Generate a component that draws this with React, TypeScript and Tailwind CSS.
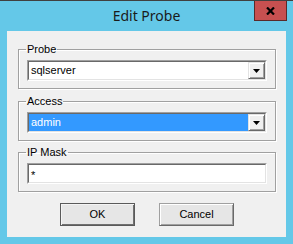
import React from "react";

function Sunken({ children, className = "" }: { children: React.ReactNode; className?: string }) {
  return (
    <div className={"h-[21px] border border-t-[#a0a0a0] border-l-[#a0a0a0] border-b-white border-r-white " + className}>
      <div className="h-full border border-t-[#696969] border-l-[#696969] border-b-[#e3e3e3] border-r-[#e3e3e3] bg-white flex">
        {children}
      </div>
    </div>
  );
}

function DropBtn() {
  return (
    <div className="w-[17px] h-full bg-[#f0f0f0] border border-t-[#e3e3e3] border-l-[#e3e3e3] border-b-[#696969] border-r-[#696969] shadow-[inset_1px_1px_0_#fff,inset_-1px_-1px_0_#a0a0a0] flex items-center justify-center">
      <svg width="7" height="4" viewBox="0 0 7 4">
        <polygon points="0,0 7,0 3.5,4" fill="#000" />
      </svg>
    </div>
  );
}

function Group({ label, children, className = "" }: { label: string; children: React.ReactNode; className?: string }) {
  return (
    <fieldset className={"border border-[#a0a0a0] shadow-[inset_1px_1px_0_#fff,1px_1px_0_#fff] px-[8px] pt-[4px] pb-[7px] " + className}>
      <legend className="text-[11px] leading-[13px] px-[1px] -ml-[1px] text-black">{label}</legend>
      {children}
    </fieldset>
  );
}

export default function App() {
  return (
    <div className="w-[293px] h-[244px] bg-[#64c8e8] border-t border-[#404040] flex flex-col font-['Liberation_Sans',sans-serif] text-black">
      <div className="grid grid-cols-[1fr_auto_1fr] h-[30px]">
        <div />
        <div className="pt-[5px] text-[14px] leading-[19px] font-['Noto_Sans',sans-serif] text-[#1a1a1a]">Edit Probe</div>
        <div className="flex justify-end pr-[6px]">
          <div className="w-[33px] h-[20px] bg-[#c75050] border border-t-0 border-[#5a2a2a] flex items-center justify-center">
            <svg width="9" height="8" viewBox="0 0 9 8">
              <path d="M1 0.5 L8 7.5 M8 0.5 L1 7.5" stroke="#000" strokeWidth="2.2" />
            </svg>
          </div>
        </div>
      </div>
      <div className="mx-[7px] h-[206px] bg-[#f0f0f0] pl-[11px] pr-[10px] pt-[12px] flex flex-col">
        <Group label="Probe">
          <Sunken>
            <div className="flex-1 pl-[2px] text-[11px] leading-[17px]">sqlserver</div>
            <DropBtn />
          </Sunken>
        </Group>
        <Group label="Access" className="mt-[6px]">
          <Sunken>
            <div className="flex-1 bg-[#3399ff] pl-[2px] text-[11px] leading-[17px] text-white">admin</div>
            <DropBtn />
          </Sunken>
        </Group>
        <Group label="IP Mask" className="mt-[5px]">
          <Sunken>
            <div className="flex-1 pl-[2px] text-[11px] leading-[17px]">
              <span className="relative top-[2px]">*</span>
            </div>
          </Sunken>
        </Group>
        <div className="mt-[11px] flex justify-center gap-[24px]">
          <button className="w-[75px] h-[23px] bg-[#e6e6e6] border border-[#5a5a5a] shadow-[inset_1px_1px_0_#f4f4f4,inset_-1px_-1px_0_#707070] text-[11px] leading-[13px]">OK</button>
          <button className="w-[75px] h-[23px] bg-[#e6e6e6] border border-t-[#a0a0a0] border-l-[#a0a0a0] border-b-[#696969] border-r-[#696969] shadow-[inset_1px_1px_0_#fff,inset_-1px_-1px_0_#a0a0a0] text-[11px] leading-[13px]">Cancel</button>
        </div>
      </div>
    </div>
  );
}
